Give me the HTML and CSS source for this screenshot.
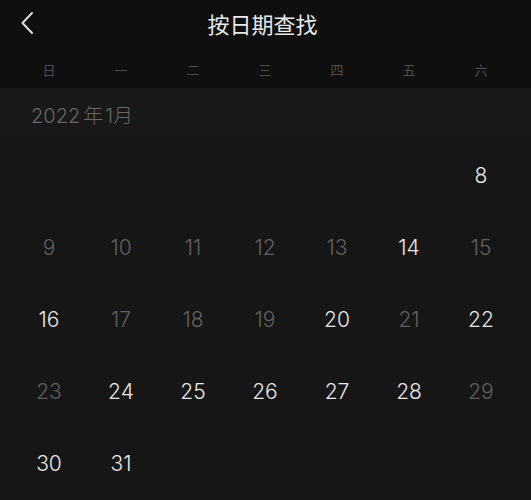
FILE: index.html
```html
<!DOCTYPE html>
<html lang="zh-CN">
<head>
    <meta charset="UTF-8">
    <meta name="viewport" content="width=device-width, initial-scale=1.0">
    <title>按日期查找</title>
    <link rel="stylesheet" href="styles.css">
</head>
<body>
    <div class="top">
        <div class="nav">
            <svg class="back" width="14" height="24" viewBox="0 0 14 24">
                <path d="M12 2 L2.5 12 L12 22" fill="none" stroke="#dcdcdc" stroke-width="2" stroke-linecap="round" stroke-linejoin="round"/>
            </svg>
            <div class="title">按日期查找</div>
        </div>
        <div class="weekdays">
            <span>日</span><span>一</span><span>二</span><span>三</span><span>四</span><span>五</span><span>六</span>
        </div>
    </div>

    <div class="month-label">2022<span class="gap">年</span>1月</div>

    <div class="days">
        <div class="day"></div>
        <div class="day"></div>
        <div class="day"></div>
        <div class="day"></div>
        <div class="day"></div>
        <div class="day"></div>
        <div class="day">8</div>

        <div class="day dim">9</div>
        <div class="day dim">10</div>
        <div class="day dim">11</div>
        <div class="day dim">12</div>
        <div class="day dim">13</div>
        <div class="day">14</div>
        <div class="day dim">15</div>

        <div class="day">16</div>
        <div class="day dim">17</div>
        <div class="day dim">18</div>
        <div class="day dim">19</div>
        <div class="day">20</div>
        <div class="day dim">21</div>
        <div class="day">22</div>

        <div class="day dim">23</div>
        <div class="day">24</div>
        <div class="day">25</div>
        <div class="day">26</div>
        <div class="day">27</div>
        <div class="day">28</div>
        <div class="day dim">29</div>

        <div class="day">30</div>
        <div class="day">31</div>
    </div>
</body>
</html>
```

FILE: styles.css
```css
body {
    margin: 0;
    background-color: #161616;
    font-family: Inter, "Noto Sans", "Noto Sans CJK SC", sans-serif;
    color: #ececec;
    overflow: hidden;
}
.top {
    background-color: #0f0f0f;
}
.nav {
    position: relative;
    height: 46px;
    display: flex;
    align-items: center;
    justify-content: center;
}
.back {
    position: absolute;
    left: 20px;
    top: 11px;
}
.title {
    font-family: "Noto Sans CJK SC", sans-serif;
    font-size: 22px;
    font-weight: 400;
    color: #e8e8e8;
    margin-left: -6px;
}
.weekdays {
    display: grid;
    grid-template-columns: repeat(7, 72px);
    padding: 0 13px;
    height: 42px;
    align-items: center;
}
.weekdays span {
    text-align: center;
    font-family: "Noto Sans CJK SC", sans-serif;
    font-size: 13px;
    color: #4e4e4e;
    margin-top: 4px;
}
.month-label {
    height: 48px;
    line-height: 57px;
    padding-left: 31px;
    font-size: 20px;
    font-weight: 300;
    color: #676767;
    font-family: Inter, "Noto Sans CJK SC", sans-serif;
    background-color: #181818;
    border-bottom: 1px solid #141414;
    overflow: hidden;
}
.gap {
    margin: 0 2px 0 3px;
}
.days {
    display: grid;
    grid-template-columns: repeat(7, 72px);
    grid-auto-rows: 72px;
    padding: 0 13px;
    margin-top: 2px;
}
.day {
    display: flex;
    align-items: center;
    justify-content: center;
    font-size: 21px;
    font-weight: 300;
    color: #e8e8e8;
}
.dim {
    color: #606060;
}
```
